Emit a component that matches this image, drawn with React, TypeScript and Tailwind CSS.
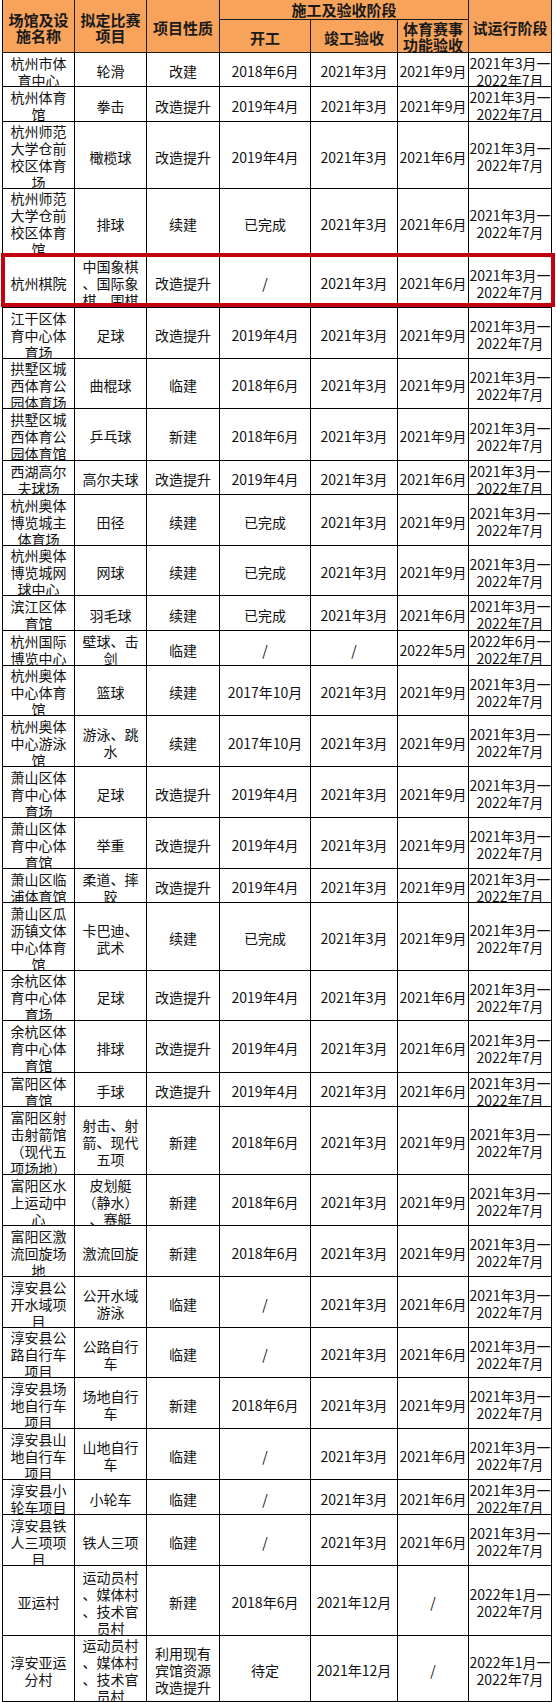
const T = '2021年3月一\n2022年7月';
const A = '2022年1月一\n2022年7月';

type Row = { h: string; c: string[] };

const rows: Row[] = [
  { h: 'h-[34px]', c: ['杭州市体\n育中心', '轮滑', '改建', '2018年6月', '2021年3月', '2021年9月', T] },
  { h: 'h-[35px]', c: ['杭州体育\n馆', '拳击', '改造提升', '2019年4月', '2021年3月', '2021年9月', T] },
  { h: 'h-[67px]', c: ['杭州师范\n大学仓前\n校区体育\n场', '橄榄球', '改造提升', '2019年4月', '2021年3月', '2021年6月', T] },
  { h: 'h-[67px]', c: ['杭州师范\n大学仓前\n校区体育\n馆', '排球', '续建', '已完成', '2021年3月', '2021年6月', T] },
  { h: 'h-[52px]', c: ['杭州棋院', '中国象棋\n、国际象\n棋、围棋', '改造提升', '/', '2021年3月', '2021年6月', T] },
  { h: 'h-[51px]', c: ['江干区体\n育中心体\n育场', '足球', '改造提升', '2019年4月', '2021年3月', '2021年9月', T] },
  { h: 'h-[50px]', c: ['拱墅区城\n西体育公\n园体育场', '曲棍球', '临建', '2018年6月', '2021年3月', '2021年9月', T] },
  { h: 'h-[52px]', c: ['拱墅区城\n西体育公\n园体育馆', '乒乓球', '新建', '2018年6月', '2021年3月', '2021年9月', T] },
  { h: 'h-[34px]', c: ['西湖高尔\n夫球场', '高尔夫球', '改造提升', '2019年4月', '2021年3月', '2021年6月', T] },
  { h: 'h-[51px]', c: ['杭州奥体\n博览城主\n体育场', '田径', '续建', '已完成', '2021年3月', '2021年9月', T] },
  { h: 'h-[50px]', c: ['杭州奥体\n博览城网\n球中心', '网球', '续建', '已完成', '2021年3月', '2021年9月', T] },
  { h: 'h-[35px]', c: ['滨江区体\n育馆', '羽毛球', '续建', '已完成', '2021年3月', '2021年6月', T] },
  { h: 'h-[35px]', c: ['杭州国际\n博览中心', '壁球、击\n剑', '临建', '/', '/', '2022年5月', '2022年6月一\n2022年7月'] },
  { h: 'h-[50px]', c: ['杭州奥体\n中心体育\n馆', '篮球', '续建', '2017年10月', '2021年3月', '2021年9月', T] },
  { h: 'h-[51px]', c: ['杭州奥体\n中心游泳\n馆', '游泳、跳\n水', '续建', '2017年10月', '2021年3月', '2021年9月', T] },
  { h: 'h-[51px]', c: ['萧山区体\n育中心体\n育场', '足球', '改造提升', '2019年4月', '2021年3月', '2021年9月', T] },
  { h: 'h-[51px]', c: ['萧山区体\n育中心体\n育馆', '举重', '改造提升', '2019年4月', '2021年3月', '2021年9月', T] },
  { h: 'h-[34px]', c: ['萧山区临\n浦体育馆', '柔道、摔\n跤', '改造提升', '2019年4月', '2021年3月', '2021年9月', T] },
  { h: 'h-[68px]', c: ['萧山区瓜\n沥镇文体\n中心体育\n馆', '卡巴迪、\n武术', '续建', '已完成', '2021年3月', '2021年9月', T] },
  { h: 'h-[50px]', c: ['余杭区体\n育中心体\n育场', '足球', '改造提升', '2019年4月', '2021年3月', '2021年6月', T] },
  { h: 'h-[52px]', c: ['余杭区体\n育中心体\n育馆', '排球', '改造提升', '2019年4月', '2021年3月', '2021年6月', T] },
  { h: 'h-[34px]', c: ['富阳区体\n育馆', '手球', '改造提升', '2019年4月', '2021年3月', '2021年6月', T] },
  { h: 'h-[68px]', c: ['富阳区射\n击射箭馆\n（现代五\n项场地）', '射击、射\n箭、现代\n五项', '新建', '2018年6月', '2021年3月', '2021年9月', T] },
  { h: 'h-[51px]', c: ['富阳区水\n上运动中\n心', '皮划艇\n（静水）\n、赛艇', '新建', '2018年6月', '2021年3月', '2021年9月', T] },
  { h: 'h-[51px]', c: ['富阳区激\n流回旋场\n地', '激流回旋', '新建', '2018年6月', '2021年3月', '2021年9月', T] },
  { h: 'h-[51px]', c: ['淳安县公\n开水域项\n目', '公开水域\n游泳', '临建', '/', '2021年3月', '2021年6月', T] },
  { h: 'h-[50px]', c: ['淳安县公\n路自行车\n项目', '公路自行\n车', '临建', '/', '2021年3月', '2021年6月', T] },
  { h: 'h-[51px]', c: ['淳安县场\n地自行车\n项目', '场地自行\n车', '新建', '2018年6月', '2021年3月', '2021年9月', T] },
  { h: 'h-[51px]', c: ['淳安县山\n地自行车\n项目', '山地自行\n车', '临建', '/', '2021年3月', '2021年6月', T] },
  { h: 'h-[35px]', c: ['淳安县小\n轮车项目', '小轮车', '临建', '/', '2021年3月', '2021年6月', T] },
  { h: 'h-[51px]', c: ['淳安县铁\n人三项项\n目', '铁人三项', '临建', '/', '2021年3月', '2021年6月', T] },
  { h: 'h-[70px]', c: ['亚运村', '运动员村\n、媒体村\n、技术官\n员村', '新建', '2018年6月', '2021年12月', '/', A] },
  { h: 'h-[66px]', c: ['淳安亚运\n分村', '运动员村\n、媒体村\n、技术官\n员村', '利用现有\n宾馆资源\n改造提升', '待定', '2021年12月', '/', A] },
];

const cols = 'grid grid-cols-[72px_72px_73px_91px_87px_71px_83px]';
const head = 'flex items-center justify-center border-r border-b border-[#1a1a1a] bg-[#f7a35c] text-center font-bold text-[15px] leading-[16px] text-[#1a1a1a] whitespace-pre-line';

export default function App() {
  return (
    <div className="min-h-screen bg-white font-['Noto_Sans_CJK_SC',sans-serif] text-[#111]">
      <div className="relative">
        <div className="ml-[2px] w-[550px] border-l border-black">
          <div className={`${cols} grid-rows-[20px_33px]`}>
            <div className={`${head} row-span-2 pt-1`}>{'场馆及设\n施名称'}</div>
            <div className={`${head} row-span-2 pt-1`}>{'拟定比赛\n项目'}</div>
            <div className={`${head} row-span-2 pt-1`}>项目性质</div>
            <div className={`${head} col-span-3`}>施工及验收阶段</div>
            <div className={`${head} row-span-2 pt-1`}>试运行阶段</div>
            <div className={`${head} pt-1`}>开工</div>
            <div className={`${head} pt-1`}>竣工验收</div>
            <div className={`${head} pt-0.5`}>{'体育赛事\n功能验收'}</div>
          </div>
          {rows.map((r, i) => (
            <div key={i} className={`${cols} ${r.h}`}>
              {r.c.map((t, j) => (
                <div
                  key={j}
                  className="flex items-center justify-center overflow-hidden border-r border-b border-black pt-1 text-center text-[14px] leading-[17px] whitespace-pre"
                >
                  {t}
                </div>
              ))}
            </div>
          ))}
        </div>
        <div className="pointer-events-none absolute left-[1px] top-[253px] h-[54px] w-[554px] border-4 border-[#c3000f]" />
      </div>
    </div>
  );
}
